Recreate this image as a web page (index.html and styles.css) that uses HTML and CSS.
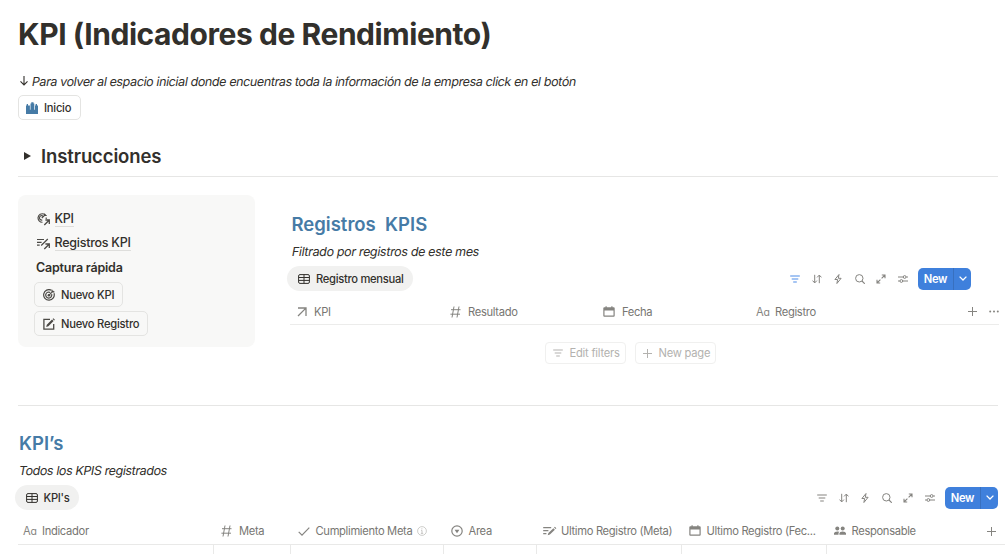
FILE: index.html
```html
<!DOCTYPE html>
<html lang="es">
<head>
<meta charset="utf-8">
<title>KPI (Indicadores de Rendimiento)</title>
<link rel="stylesheet" href="styles.css">
</head>
<body>
<svg class="sprite" aria-hidden="true">
  <symbol id="city" viewBox="0 0 12 12"><path fill="currentColor" d="M0 3.500h.7V2h1.300v1.500h1.900v4.300h.6V1.500h.8V.2h2.200v1.300H8.300v6.300h.7V3.500h.600V2h1.400v1.500h1V12H0z"/></symbol>
  <symbol id="target" viewBox="0 0 12 12"><g fill="none" stroke="currentColor" stroke-width="1.200"><path d="M8.300 1.150A5.300 5.300 0 1 0 11 4.300M7.300 3.500A3 3 0 1 0 8.600 5.200"/><path d="M6 6.200 10.400 1.800M9 .7v2.200h2.400" stroke-width="1.100"/></g><circle cx="5.900" cy="6.200" r="1.300" fill="currentColor"/></symbol>
  <symbol id="target-link" viewBox="0 0 13 13"><g fill="none" stroke="currentColor"><path d="M6.800 1.100A4.200 4.200 0 1 0 5.500 9.200M6 3.100A2.200 2.200 0 1 0 5.300 7M4.800 5 8.700 1.300M7.500.5v2h2.200M9.200 4.500v1.500" stroke-width="1.150"/><path d="M7.300 12 11.800 7.500M8.400 7h3.900v3.900" stroke-width="1.300"/></g></symbol>
  <symbol id="list-link" viewBox="0 0 13 13"><g fill="none" stroke="currentColor"><path d="M0 2.500h7M0 5.300h4.600M0 8.100h2.700M4.200 8.500 10.800 2" stroke-width="1.200"/><path d="M7.300 12 11.800 7.500M8.400 7h3.900v3.900" stroke-width="1.300"/></g></symbol>
  <symbol id="compose" viewBox="0 0 12 12"><path d="M7 1.300H.9v9.900h9.800V6" fill="none" stroke="currentColor" stroke-width="1.300"/><path d="m3.200 8.900.6-2.200L9 1.500l1.600 1.600-5.200 5.200zM9.600.9l.8-.7 1.500 1.500-.7.800z" fill="currentColor"/></symbol>
  <symbol id="table" viewBox="0 0 12 10"><path d="M2 .6h8A1.400 1.400 0 0 1 11.400 2v6A1.400 1.400 0 0 1 10 9.400H2A1.400 1.400 0 0 1 .6 8V2A1.400 1.400 0 0 1 2 .6zM.6 3.500h10.800M.6 6.400h10.800M6 .6v8.800" fill="none" stroke="currentColor"/></symbol>
  <symbol id="arrow-ne" viewBox="0 0 10 10"><path d="M1 9 8.900 1.100M1 1h8v8" fill="none" stroke="currentColor" stroke-width="1.300"/></symbol>
  <symbol id="hash" viewBox="0 0 11 12"><path d="M4 .5 2 11.500M9 .5 7 11.500M1 3.700h9.500M.4 8.200H10" fill="none" stroke="currentColor"/></symbol>
  <symbol id="calendar" viewBox="0 0 12 12"><path d="M1.300 1.200h1.200V.2h1.200v1h4.600v-1h1.200v1h1.200q1 0 1 1v7.600q0 1-1 1H1.300q-1 0-1-1V2.200q0-1 1-1zM1.500 4.500v5.100h9V4.500z" fill="currentColor" fill-rule="evenodd"/></symbol>
  <symbol id="filter" viewBox="0 0 10 8"><path d="M.2 1h9.600M1.700 4h6.600M3.200 7h3.600" fill="none" stroke="currentColor" stroke-width="1.100"/></symbol>
  <symbol id="sort" viewBox="0 0 10 10"><path d="M2.700.8v8M.5 6.600l2.200 2.300 2.200-2.300M7.300 9.200v-8M5.100 3.400l2.200-2.300 2.200 2.300" fill="none" stroke="currentColor"/></symbol>
  <symbol id="bolt" viewBox="0 0 10 10"><path d="M6 .5 1.900 5.500h2.700L3.900 9.500 8.100 4.300H5.300z" fill="none" stroke="currentColor" stroke-linejoin="round"/></symbol>
  <symbol id="search" viewBox="0 0 10 10"><circle cx="4.300" cy="4.300" r="3.700" fill="none" stroke="currentColor"/><path d="m7 7 2.800 2.800" stroke="currentColor" stroke-width="1.100"/></symbol>
  <symbol id="expand" viewBox="0 0 10 10"><path d="M5.800 1H9v3.200M9 1 5.600 4.400M4.200 9H1V5.800M1 9l3.400-3.400" fill="none" stroke="currentColor" stroke-width="1.100"/></symbol>
  <symbol id="sliders" viewBox="0 0 10 8"><path d="M0 2h5.100M8.200 2H10M0 6h1.800M4.900 6H10" stroke="currentColor"/><g fill="none" stroke="currentColor"><circle cx="6.650" cy="2" r="1.400"/><circle cx="3.350" cy="6" r="1.400"/></g></symbol>
  <symbol id="chevron" viewBox="0 0 8 5"><path d="m.6.600 3.400 3.400L7.400.600" fill="none" stroke="currentColor" stroke-width="1.300"/></symbol>
  <symbol id="plus" viewBox="0 0 9 9"><path d="M4.500 0v9M0 4.500h9" stroke="currentColor"/></symbol>
  <symbol id="dots" viewBox="0 0 10 3"><g fill="currentColor"><circle cx="1.200" cy="1.500" r="1"/><circle cx="5" cy="1.500" r="1"/><circle cx="8.800" cy="1.500" r="1"/></g></symbol>
  <symbol id="check" viewBox="0 0 12 9"><path d="m.7 4.900 3.300 3.200L11.300.7" fill="none" stroke="currentColor" stroke-width="1.200"/></symbol>
  <symbol id="info" viewBox="0 0 10 10"><circle cx="5" cy="5" r="4.400" fill="none" stroke="currentColor" stroke-width=".8"/><path d="M4.100 4.400H5v3M3.900 7.400h2.300M4.900 2.300v1" fill="none" stroke="currentColor" stroke-width=".9"/></symbol>
  <symbol id="select" viewBox="0 0 12 12"><circle cx="6" cy="6" r="5.200" fill="none" stroke="currentColor" stroke-width="1.200"/><path d="M3.600 4.700h4.800L6 8.200z" fill="currentColor"/></symbol>
  <symbol id="list-pen" viewBox="0 0 14 10"><path d="M.2 1.600h8M.2 4.600h5.200M.2 7.600h3.200" stroke="currentColor" stroke-width="1.100"/><path d="m4.700 9.300.7-2.200 5-4.900 1.500 1.500-5 4.900zM11 1.600l.9-.9 1.500 1.500-.9.9z" fill="currentColor"/></symbol>
  <symbol id="people" viewBox="0 0 12 10"><g fill="currentColor"><circle cx="3.300" cy="2.400" r="2"/><circle cx="8.700" cy="2.400" r="2"/><path d="M0 8.700V7.200Q.3 5.400 3.300 5.400q1.300 0 2 .4-.8.8-.8 1.800v1.100zM5.400 8.700V7.300q.3-1.900 3.300-1.900T12 7.300v1.400z"/></g></symbol>
  <symbol id="arrow-down" viewBox="0 0 8 10"><path d="M4 0v8.800M.5 5.400 4 8.900l3.500-3.500" fill="none" stroke="currentColor" stroke-width="1.100"/></symbol>
</svg>

<main class="page">
  <h1 class="title">KPI (Indicadores de Rendimiento)</h1>
  <p class="note note-home"><svg class="down"><use href="#arrow-down"/></svg><em>Para volver al espacio inicial donde encuentras toda la información de la empresa click en el botón</em></p>
  <button class="button home"><svg class="i12 city"><use href="#city"/></svg><span>Inicio</span></button>
  <h2 class="toggle"><span class="triangle"></span><span>Instrucciones</span></h2>

  <div class="columns">
    <aside class="card">
      <a class="link"><svg class="i13"><use href="#target-link"/></svg><span>KPI</span></a>
      <a class="link"><svg class="i13"><use href="#list-link"/></svg><span>Registros KPI</span></a>
      <h3 class="quick">Captura rápida</h3>
      <button class="button quick-kpi"><svg class="i12"><use href="#target"/></svg><span>Nuevo KPI</span></button>
      <button class="button quick-reg"><svg class="i12"><use href="#compose"/></svg><span>Nuevo Registro</span></button>
    </aside>

    <section class="records">
      <h2 class="heading heading-records">Registros&nbsp; KPIS</h2>
      <p class="note note-records"><em>Filtrado por registros de este mes</em></p>
      <div class="bar">
        <div class="tab tab-records"><svg class="table-icon"><use href="#table"/></svg><span>Registro mensual</span></div>
        <div class="tools">
          <svg class="tool wide active"><use href="#filter"/></svg>
          <svg class="tool"><use href="#sort"/></svg>
          <svg class="tool"><use href="#bolt"/></svg>
          <svg class="tool"><use href="#search"/></svg>
          <svg class="tool"><use href="#expand"/></svg>
          <svg class="tool wide"><use href="#sliders"/></svg>
          <button class="new"><span class="new-label">New</span><span class="new-more"><svg class="chevron"><use href="#chevron"/></svg></span></button>
        </div>
      </div>
      <div class="header header-records">
        <div class="cell"><svg class="i10"><use href="#arrow-ne"/></svg><span>KPI</span></div>
        <div class="cell"><svg class="hash"><use href="#hash"/></svg><span>Resultado</span></div>
        <div class="cell"><svg class="i12"><use href="#calendar"/></svg><span>Fecha</span></div>
        <div class="cell"><span class="aa">A<small>a</small></span><span>Registro</span></div>
        <div class="cell end"><svg class="i9"><use href="#plus"/></svg><svg class="dots"><use href="#dots"/></svg></div>
      </div>
      <div class="empty">
        <button class="ghost"><svg class="tool wide"><use href="#filter"/></svg><span>Edit filters</span></button>
        <button class="ghost"><svg class="i9"><use href="#plus"/></svg><span>New page</span></button>
      </div>
    </section>
  </div>

  <section class="indicators">
    <h2 class="heading heading-kpis">KPI’s</h2>
    <p class="note note-kpis"><em>Todos los KPIS registrados</em></p>
    <div class="bar bar-kpis">
      <div class="tab tab-kpis"><svg class="table-icon"><use href="#table"/></svg><span>KPI's</span></div>
      <div class="tools">
        <svg class="tool wide"><use href="#filter"/></svg>
        <svg class="tool"><use href="#sort"/></svg>
        <svg class="tool"><use href="#bolt"/></svg>
        <svg class="tool"><use href="#search"/></svg>
        <svg class="tool"><use href="#expand"/></svg>
        <svg class="tool wide"><use href="#sliders"/></svg>
        <button class="new"><span class="new-label">New</span><span class="new-more"><svg class="chevron"><use href="#chevron"/></svg></span></button>
      </div>
    </div>
    <div class="grid header header-kpis">
      <div class="cell"><span class="aa">A<small>a</small></span><span>Indicador</span></div>
      <div class="cell"><svg class="hash"><use href="#hash"/></svg><span>Meta</span></div>
      <div class="cell tight"><svg class="check"><use href="#check"/></svg><span>Cumplimiento Meta</span><svg class="info"><use href="#info"/></svg></div>
      <div class="cell tight"><svg class="i12"><use href="#select"/></svg><span>Area</span></div>
      <div class="cell cell-meta"><svg class="pen"><use href="#list-pen"/></svg><span>Ultimo Registro (Meta)</span></div>
      <div class="cell tight"><svg class="i12"><use href="#calendar"/></svg><span>Ultimo Registro (Fec...</span></div>
      <div class="cell tight"><svg class="people"><use href="#people"/></svg><span>Responsable</span></div>
      <div class="cell end"><svg class="i9"><use href="#plus"/></svg></div>
    </div>
    <div class="grid row"><i></i><i></i><i></i><i></i><i></i><i></i></div>
  </section>
</main>
</body>
</html>
```
FILE: styles.css
```css
* { box-sizing: border-box; }
html { overflow: hidden; }
body {
  margin: 0;
  height: 554px;
  overflow: hidden;
  background: #fff;
  color: #32302c;
  font-family: Inter, "Liberation Sans", sans-serif;
  font-size: 12px;
}
h1, h2, h3, p { margin: 0; white-space: nowrap; }
button { font: inherit; color: inherit; background: none; padding: 0; margin: 0; }
svg { display: block; flex: none; }
span { white-space: nowrap; }
.sprite { display: none; }
.page { padding: 16px 0 0 18px; width: 1005px; }

.title { font-size: 30px; line-height: 37px; font-weight: 700; letter-spacing: -.44px; }
.note { display: flex; align-items: center; height: 20px; font-size: 12.500px; letter-spacing: -.34px; }
/* Slanted upright letterforms keep the two-storey "a". */
.note em { display: inline-block; font-style: normal; transform: skewX(-10deg); }
.note-home { margin-top: 18px; padding-left: 2px; letter-spacing: -.38px; }
.down { width: 8px; height: 10px; margin-right: 4px; }

.button {
  display: flex;
  align-items: center;
  gap: 6px;
  height: 25px;
  padding: 0 0 0 8px;
  border: 1px solid #e4e4e2;
  border-radius: 5px;
  font-size: 11.200px;
  font-weight: 500;
  letter-spacing: -.24px;
}
.home { width: 63px; margin-top: 4px; padding-left: 7px; }
.city { color: #467ba6; }
.i12 { width: 12px; height: 12px; }
.i13 { width: 13px; height: 13px; }
.i10 { width: 10px; height: 10px; }
.i9 { width: 9px; height: 9px; }
.link svg, .button svg:not(.city) { color: #4b4945; }

.toggle {
  display: flex;
  align-items: center;
  width: 980px;
  height: 41px;
  margin-top: 16px;
  padding-left: 6px;
  border-bottom: 1px solid #e6e6e5;
  font-size: 18.500px;
  font-weight: 600;
  letter-spacing: -.12px;
}
.triangle {
  width: 7px;
  height: 8px;
  margin-right: 10px;
  background: #32302c;
  clip-path: polygon(0 0, 100% 50%, 0 100%);
}

.columns { display: flex; width: 980px; height: 229px; padding-top: 18px; border-bottom: 1px solid #e6e6e5; }
.card {
  flex: none;
  width: 237px;
  height: 152px;
  padding: 12px 0 0 17px;
  border-radius: 8px;
  background: #f8f8f7;
}
.link { display: flex; align-items: center; gap: 4.500px; height: 24px; padding-left: 2px; font-size: 12.500px; font-weight: 500; letter-spacing: -.25px; }
.link span { line-height: 15px; border-bottom: 1px solid #dededc; }
.quick { height: 25px; line-height: 25px; padding-left: 1px; font-size: 12.500px; font-weight: 600; letter-spacing: -.2px; }
.quick-kpi { width: 89px; margin: 2px 0 0 -1px; }
.quick-reg { width: 114px; margin: 4px 0 0 -1px; }

.records { width: 708px; margin-left: 36px; flex: none; }
.heading { color: #467ba6; font-size: 18.500px; line-height: 28px; font-weight: 600; }
.heading-records { margin-top: 15px; padding-left: .5px; }
.note-records { margin-top: 3px; padding-left: .5px; }
.bar { display: flex; justify-content: space-between; align-items: center; height: 25px; }
.records .bar { width: 684px; margin: 5px 0 0 -4px; }
.tab {
  display: flex;
  align-items: center;
  gap: 6px;
  height: 25px;
  padding-left: 11px;
  border-radius: 13px;
  background: #f1f1f0;
  font-size: 11.200px;
  font-weight: 500;
  letter-spacing: -.3px;
}
.tab-records { width: 126px; }
.tab-kpis { width: 64px; padding-left: 10.500px; }
.table-icon { width: 12px; height: 10px; }
.tools { display: flex; align-items: center; gap: 11.500px; color: #858480; }
.tool { width: 10px; height: 10px; }
.wide { height: 8px; }
.active { color: #4c8be8; }
.new {
  display: flex;
  width: 53px;
  height: 22px;
  margin-left: -1px;
  border: 0;
  border-radius: 5px;
  overflow: hidden;
  background: #3f80dc;
  color: #fff;
  font-size: 11.200px;
  font-weight: 600;
  line-height: 22px;
  letter-spacing: -.3px;
}
.new-label { width: 35px; text-align: center; }
.new-more { display: flex; flex: 1; align-items: center; justify-content: center; border-left: 1px solid #3870bf; }
.chevron { width: 8px; height: 5px; }

.header { height: 27px; color: #777672; font-size: 11.200px; letter-spacing: -.33px; }
.header svg, .aa { color: #858480; }
.cell { display: flex; align-items: center; gap: 7px; min-width: 0; }
.tight { gap: 5.500px; }
.header-records { display: grid; grid-template-columns: 153px 153px 153px 1fr 31px; width: 709px; height: 26px; margin: 8px 0 0 -1px; border-bottom: 1px solid #ececeb; }
.header-records .cell { padding-left: 7px; }
.header-records .cell.end { padding: 0; gap: 12px; }
.hash { width: 11px; height: 12px; }
.aa { width: 12px; font-size: 11.200px; font-feature-settings: "cv11"; }
.aa small { font-size: 10.500px; }
.dots { width: 10px; height: 3px; }
.empty { display: flex; gap: 9px; margin: 17px 0 0 254px; color: #b3b2af; }
.ghost { display: flex; align-items: center; gap: 6.500px; width: 81px; height: 22px; padding-left: 7px; border: 1px solid #f0f0ef; border-radius: 4px; font-size: 11.200px; letter-spacing: -.24px; }

.indicators { padding-top: 23px; }
.heading-kpis { padding-left: 1px; }
.note-kpis { margin-top: 3px; padding-left: 1px; }
.bar-kpis { width: 983px; margin: 5px 0 0 -3px; }
.grid { display: grid; grid-template-columns: 196px 77px 153px 93px 145px 145px 156px 15px; width: 980px; }
.header-kpis { height: 27px; margin-top: 8px; width: 987px; border-bottom: 1px solid #e9e9e8; }
.header-kpis .cell { padding-left: 7px; }
.header-kpis .cell:first-child { padding-left: 5px; }
.header-kpis .cell.end { padding-left: 4px; }
.header-kpis .cell-meta { gap: 4px; padding-left: 6px; }
.header .info { width: 10px; height: 10px; margin-left: -1px; color: #c2c1be; }
.check { width: 12px; height: 9px; }
.pen { width: 14px; height: 10px; }
.people { width: 12px; height: 10px; }
.row { height: 20px; }
.row i { border-right: 1px solid #e9e9e8; }
.note-kpis { letter-spacing: -.4px; }
```
